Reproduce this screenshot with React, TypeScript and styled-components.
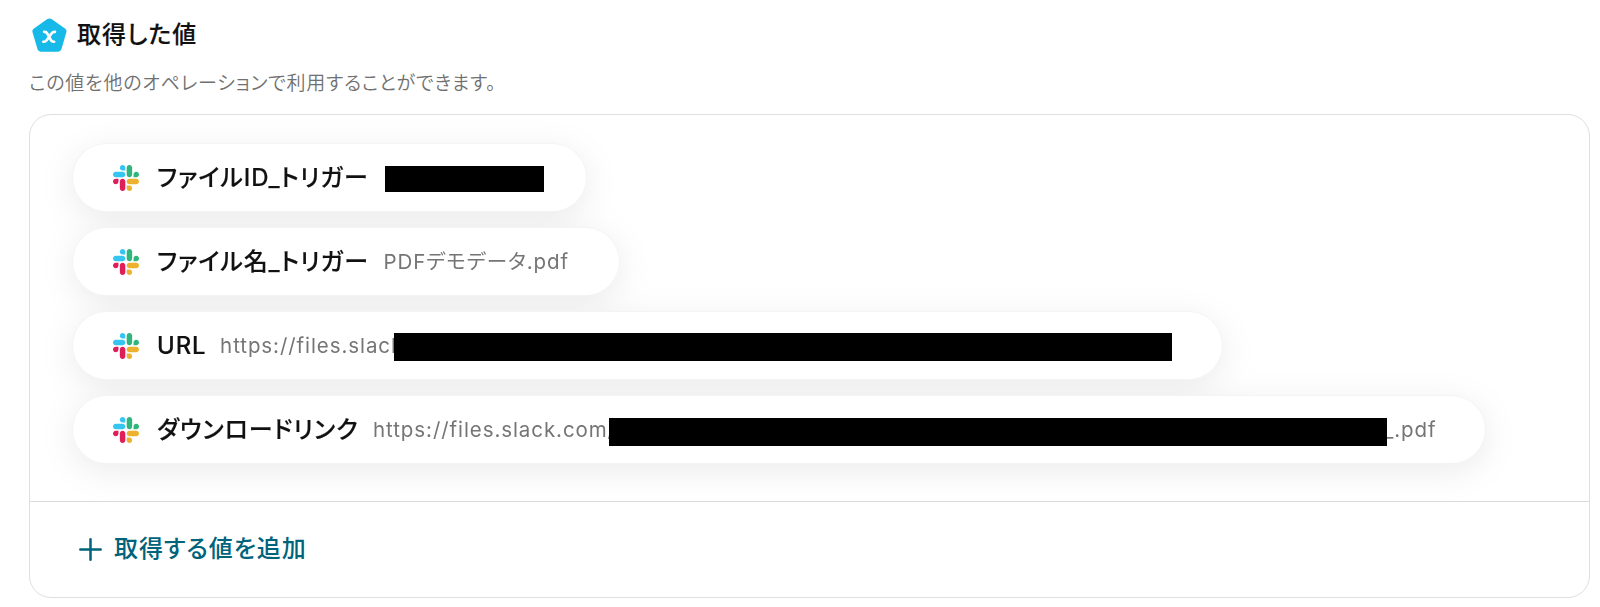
import React from 'react'
import styled, { createGlobalStyle } from 'styled-components'

const GlobalStyle = createGlobalStyle`
    * {
        box-sizing: border-box;
    }
    body {
        margin: 0;
        background-color: #fff;
        color: #111;
        font-family: Inter, 'Noto Sans CJK JP', sans-serif;
        font-feature-settings: 'palt';
    }
`

const StyledPage = styled.main`
    height: 607px;
    padding: 17px 10px 0 29px;
    overflow: hidden;
`

const StyledHeader = styled.header`
    display: flex;
    align-items: center;
    gap: 10px;
    height: 36px;
    padding-left: 3px;
`

const StyledTitle = styled.h1`
    margin: 0;
    font-size: 24px;
    font-weight: 500;
    line-height: 36px;
    letter-spacing: 1px;
    -webkit-text-stroke: 0.15px currentColor;
`

const StyledDescription = styled.p`
    margin: 16px 0 15px;
    color: #707070;
    font-size: 19px;
    font-weight: 350;
    line-height: 30px;
    letter-spacing: 0.78px;
`

const StyledPanel = styled.section`
    height: 484px;
    border: 1px solid #dfdfdf;
    border-radius: 22px;
    overflow: hidden;
`

const StyledValueList = styled.ul`
    display: flex;
    flex-direction: column;
    align-items: flex-start;
    gap: 17px;
    height: 386px;
    margin: 0;
    padding: 29px 44px 0 43px;
    list-style: none;
    filter: drop-shadow(0 7px 16px rgba(0, 0, 0, 0.08));
`

const StyledValue = styled.li<{ $end: number }>`
    display: flex;
    align-items: center;
    height: 67px;
    padding: 0 ${({ $end }) => $end}px 0 40px;
    border-radius: 34px;
    background-color: #fff;
    box-shadow: 0 0 0 1px #f4f4f4;
    white-space: nowrap;
`

const StyledLabel = styled.span`
    margin: 0 14.5px 0 18px;
    font-size: 24px;
    font-weight: 500;
    line-height: 36px;
    letter-spacing: 0.9px;
    -webkit-text-stroke: 0.15px currentColor;
`

const StyledText = styled.span<{ $overlap?: number }>`
    margin-top: 1px;
    margin-left: ${({ $overlap = 0 }) => -$overlap}px;
    color: #757575;
    font-size: 20.5px;
    line-height: 32px;
    letter-spacing: 0.92px;
`

const StyledMask = styled.span<{ $width: number; $height: number; $overlap?: number; $drop?: number }>`
    position: relative;
    z-index: 1;
    width: ${({ $width }) => $width}px;
    height: ${({ $height }) => $height}px;
    margin-top: ${({ $drop = 0 }) => $drop}px;
    margin-left: ${({ $overlap = 0 }) => -$overlap}px;
    background-color: #000;
`

const StyledAddButton = styled.button`
    display: flex;
    align-items: center;
    gap: 12px;
    width: 100%;
    height: 97px;
    padding: 0 0 2px 49px;
    border: none;
    border-top: 1px solid #dcdcdc;
    background: none;
    color: #00637c;
    font: inherit;
    font-size: 24px;
    font-weight: 500;
    line-height: 36px;
    letter-spacing: 0.9px;
    font-feature-settings: inherit;
    cursor: pointer;
`

const ValueIcon = () => (
    <svg width="35" height="34" viewBox="1.3 1.2 32.5 31.5">
        <path
            d="M15.2 2.3 2.8 11.2Q1.2 12.5 1.8 14.4L6.5 30.5Q7.2 32.5 9.4 32.5H25.6Q27.8 32.5 28.5 30.5L33.2 14.4Q33.8 12.5 32.2 11.2L19.8 2.3Q17.5.8 15.2 2.3Z"
            fill="#16b9e8"
        />
        <path
            d="M12.6 14H13Q14.6 14 15.4 15.5L18.9 21.7Q19.7 23.2 21.4 23.2H21.8M22.6 14H22.2Q20.6 14 19.6 15.4L14.9 21.8Q13.9 23.2 12.2 23.2H11.8"
            fill="none"
            stroke="#fff"
            strokeWidth="2.5"
            strokeLinecap="round"
        />
    </svg>
)

const SlackIcon = () => (
    <svg width="26" height="26" viewBox="0 0 122.8 122.8">
        <path
            d="M25.8 77.6c0 7.1-5.8 12.9-12.9 12.9S0 84.7 0 77.6s5.8-12.9 12.9-12.9h12.9v12.9zm6.5 0c0-7.1 5.8-12.9 12.9-12.9s12.9 5.8 12.9 12.9v32.3c0 7.1-5.8 12.9-12.9 12.9s-12.9-5.8-12.9-12.9V77.6z"
            fill="#e01e5a"
        />
        <path
            d="M45.2 25.8c-7.1 0-12.9-5.8-12.9-12.9S38.1 0 45.2 0s12.9 5.8 12.9 12.9v12.9H45.2zm0 6.5c7.1 0 12.9 5.8 12.9 12.9s-5.8 12.9-12.9 12.9H12.9C5.8 58.1 0 52.3 0 45.2s5.8-12.9 12.9-12.9h32.3z"
            fill="#36c5f0"
        />
        <path
            d="M97 45.2c0-7.1 5.8-12.9 12.9-12.9s12.9 5.8 12.9 12.9-5.8 12.9-12.9 12.9H97V45.2zm-6.5 0c0 7.1-5.8 12.9-12.9 12.9s-12.9-5.8-12.9-12.9V12.9C64.7 5.8 70.5 0 77.6 0s12.9 5.8 12.9 12.9v32.3z"
            fill="#2eb67d"
        />
        <path
            d="M77.6 97c7.1 0 12.9 5.8 12.9 12.9s-5.8 12.9-12.9 12.9-12.9-5.8-12.9-12.9V97h12.9zm0-6.5c-7.1 0-12.9-5.8-12.9-12.9s5.8-12.9 12.9-12.9h32.3c7.1 0 12.9 5.8 12.9 12.9s-5.8 12.9-12.9 12.9H77.6z"
            fill="#ecb22e"
        />
    </svg>
)

const PlusIcon = () => (
    <svg width="23" height="23" viewBox="0 0 23 23">
        <path d="M11.5 1.3v20.4M1.3 11.5h20.4" fill="none" stroke="currentColor" strokeWidth="2.5" strokeLinecap="round" />
    </svg>
)

const App = () => {
    return (
        <>
            <GlobalStyle />
            <StyledPage>
                <StyledHeader>
                    <ValueIcon />
                    <StyledTitle>取得した値</StyledTitle>
                </StyledHeader>
                <StyledDescription>この値を他のオペレーションで利用することができます。</StyledDescription>
                <StyledPanel>
                    <StyledValueList>
                        <StyledValue $end={42}>
                            <SlackIcon />
                            <StyledLabel>ファイルID_トリガー</StyledLabel>
                            <StyledMask $width={159} $height={26} $overlap={-2} $drop={2} />
                        </StyledValue>
                        <StyledValue $end={50}>
                            <SlackIcon />
                            <StyledLabel>ファイル名_トリガー</StyledLabel>
                            <StyledText>PDFデモデータ.pdf</StyledText>
                        </StyledValue>
                        <StyledValue $end={50}>
                            <SlackIcon />
                            <StyledLabel>URL</StyledLabel>
                            <StyledText $overlap={1}>https://files.slack</StyledText>
                            <StyledMask $width={778} $height={28} $overlap={9.5} $drop={2} />
                        </StyledValue>
                        <StyledValue $end={49}>
                            <SlackIcon />
                            <StyledLabel>ダウンロードリンク</StyledLabel>
                            <StyledText>https://files.slack.com/</StyledText>
                            <StyledMask $width={778} $height={28} $overlap={7} $drop={4} />
                            <StyledText $overlap={3}>_.pdf</StyledText>
                        </StyledValue>
                    </StyledValueList>
                    <StyledAddButton>
                        <PlusIcon />
                        取得する値を追加
                    </StyledAddButton>
                </StyledPanel>
            </StyledPage>
        </>
    )
}
export default App
